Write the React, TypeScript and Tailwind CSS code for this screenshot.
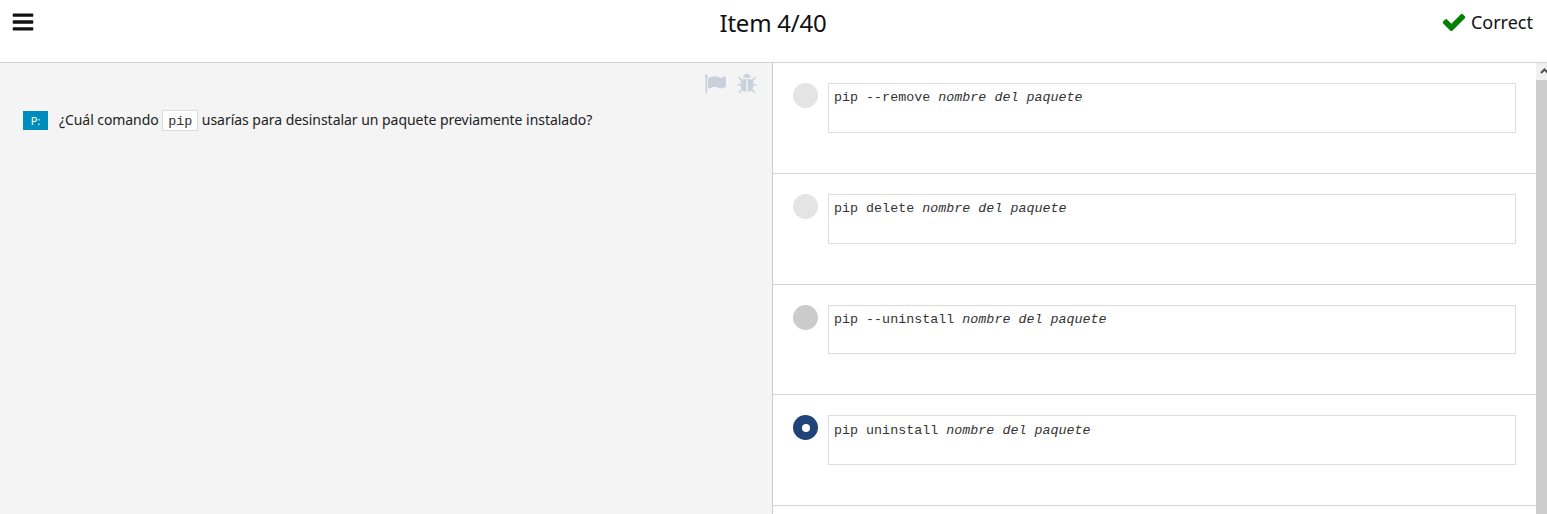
import React from "react";

const icons = {
  bars: "M1664 1344v128q0 26-19 45t-45 19h-1408q-26 0-45-19t-19-45v-128q0-26 19-45t45-19h1408q26 0 45 19t19 45zm0-512v128q0 26-19 45t-45 19h-1408q-26 0-45-19t-19-45v-128q0-26 19-45t45-19h1408q26 0 45 19t19 45zm0-512v128q0 26-19 45t-45 19h-1408q-26 0-45-19t-19-45v-128q0-26 19-45t45-19h1408q26 0 45 19t19 45z",
  check: "M1671 566q0 40-28 68l-724 724-136 136q-28 28-68 28t-68-28l-136-136-362-362q-28-28-28-68t28-68l136-136q28-28 68-28t68 28l294 295 656-657q28-28 68-28t68 28l136 136q28 28 28 68z",
  flag: "M320 256q0 72-64 110v1266q0 13-9.5 22.5t-22.5 9.5h-64q-13 0-22.5-9.5t-9.5-22.5v-1266q-64-38-64-110 0-53 37.5-90.5t90.5-37.5 90.5 37.5 37.5 90.5zm1472 64v763q0 25-12.5 38.5t-39.5 27.5q-215 116-369 116-61 0-123.5-22t-108.5-48-115.5-48-142.5-22q-192 0-464 146-17 9-33 9-26 0-45-19t-19-45v-742q0-32 31-55 21-14 79-43 236-120 421-120 107 0 200 29t219 88q38 19 88 19 54 0 117.5-21t110-47 88-47 54.5-21q26 0 45 19t19 45z",
  bug: "M1696 960q0 26-19 45t-45 19h-224q0 171-67 290l208 209q19 19 19 45t-19 45q-18 19-45 19t-45-19l-198-197q-5 5-15 13t-42 28.5-65 36.5-82 29-97 13v-896h-128v896q-51 0-101.5-13.5t-87-33-66-39-43.5-32.5l-15-14-183 207q-20 21-48 21-24 0-43-16-19-18-20.5-44.5t15.5-46.5l202-227q-58-114-58-274h-224q-26 0-45-19t-19-45 19-45 45-19h224v-294l-173-173q-19-19-19-45t19-45 45-19 45 19l173 173h844l173-173q19-19 45-19t45 19 19 45-19 45l-173 173v294h224q26 0 45 19t19 45zm-480-576h-640q0-133 93.5-226.5t226.5-93.5 226.5 93.5 93.5 226.5z",
};

function Icon({ name, className }: { name: keyof typeof icons; className: string }) {
  return (
    <svg viewBox="0 0 1792 1792" className={className} fill="currentColor" aria-hidden="true">
      <path d={icons[name]} />
    </svg>
  );
}

const answers = [
  { command: "pip --remove", row: "h-[111px]", box: "h-[50px] pt-[4px]", dot: "bg-[#e4e4e4]", selected: false },
  { command: "pip delete", row: "h-[111px]", box: "h-[50px] pt-[4px]", dot: "bg-[#e4e4e4]", selected: false },
  { command: "pip --uninstall", row: "h-[110px]", box: "h-[49px] pt-[4px]", dot: "bg-[#cbcbcb]", selected: false },
  { command: "pip uninstall", row: "h-[111px]", box: "h-[50px] pt-[5px]", dot: "bg-[#214478]", selected: true },
];

export default function App() {
  return (
    <div className="flex h-[514px] w-[1547px] flex-col overflow-hidden bg-white font-['Noto_Sans',sans-serif] text-[#111]">
      <header className="grid h-[63px] shrink-0 grid-cols-3 border-b border-[#d3d3d3]">
        <button className="ml-[11px] mt-[10px] h-6 w-6">
          <Icon name="bars" className="h-6 w-6" />
        </button>
        <h1 className="mt-[7px] pr-px text-center text-[24px] leading-8 tracking-[-0.25px]">Item 4/40</h1>
        <div className="mr-[14px] mt-[9px] flex h-[26px] items-center justify-end gap-[4px]">
          <Icon name="check" className="size-[26px] text-[#008000]" />
          <span className="text-[18px] leading-[26px]">Correct</span>
        </div>
      </header>
      <main className="flex min-h-0 flex-1">
        <section className="w-[773px] shrink-0 border-r border-[#cbcbcb] bg-[#f4f4f4]">
          <div className="flex h-[47px] justify-end gap-[10px] pr-[14px] pt-[10px] text-[#cad0dc]">
            <Icon name="flag" className="size-[22px]" />
            <Icon name="bug" className="size-[22px]" />
          </div>
          <div className="flex h-[21px] items-center pl-[23px] text-[14px] text-[#222]">
            <span className="mr-[11px] flex h-[19px] w-[25px] items-center justify-center bg-[#008dbd] pt-px text-[11px] text-white">P:</span>
            <span className="whitespace-pre pb-[2px] tracking-[-0.07px]">¿Cuál comando </span>
            <code className="flex h-[21px] w-[36px] items-center justify-center border border-[#ddd] bg-white pt-[2px] font-['Liberation_Mono',monospace] text-[13.333px] text-[#333]">pip</code>
            <span className="whitespace-pre pb-[2px] tracking-[-0.035px]"> usarías para desinstalar un paquete previamente instalado?</span>
          </div>
        </section>
        <section className="min-w-0 flex-1">
          {answers.map((a) => (
            <div key={a.command} className={`flex gap-[10px] border-b border-[#d3d3d3] pl-[20px] pr-[20px] pt-[20px] ${a.row}`}>
              <span className={`flex size-[25px] shrink-0 items-center justify-center rounded-full ${a.dot}`}>
                {a.selected && <span className="size-[8px] rounded-full bg-white" />}
              </span>
              <pre className={`flex-1 border border-[#ddd] px-[5px] font-['Liberation_Mono',monospace] text-[13.333px] leading-[20px] tracking-[0.02px] text-[#333] ${a.box}`}>
                {a.command} <em>nombre del paquete</em>
              </pre>
            </div>
          ))}
        </section>
        <div className="flex w-[11px] shrink-0 flex-col overflow-hidden bg-[#cdcdcd]">
          <div className="flex h-[17px] w-[17px] shrink-0 items-center justify-center bg-[#f0f0f0] pb-[2px]">
            <svg viewBox="0 0 9 6" className="h-[6px] w-[9px]" fill="none" stroke="#505050" strokeWidth="2">
              <path d="M1 5 4.5 1.5 8 5" />
            </svg>
          </div>
        </div>
      </main>
    </div>
  );
}
